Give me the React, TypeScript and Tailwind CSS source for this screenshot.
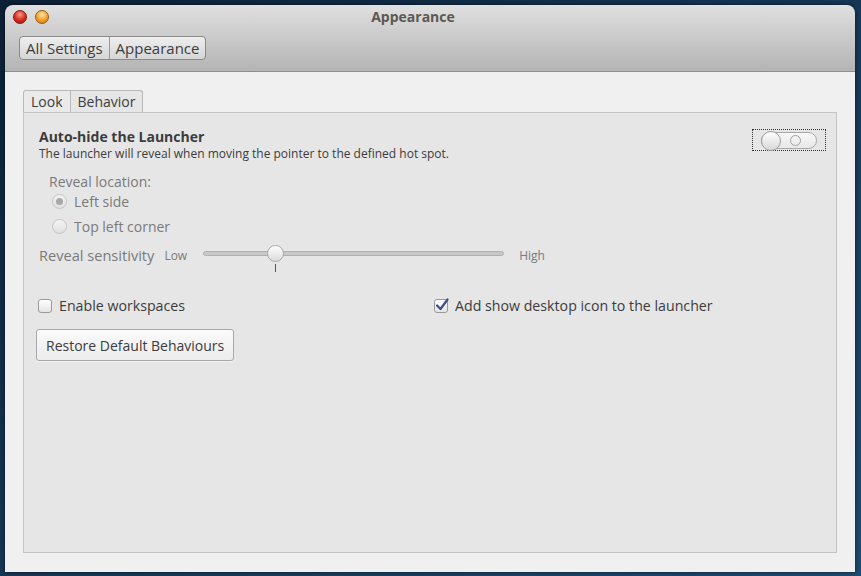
import React from 'react';

const font = { fontFamily: '"Open Sans", "DejaVu Sans", sans-serif' };

function Radio({ checked, label }: { checked?: boolean; label: string }) {
  return (
    <div className="flex items-center h-[25px]">
      <span className="w-[15px] h-[15px] rounded-full border border-[#c4c4c4] bg-gradient-to-b from-[#f4f4f4] to-[#e0e0e0] flex items-center justify-center">
        {checked && <span className="w-[7px] h-[7px] rounded-full bg-[#a8a8a8]" />}
      </span>
      <span className="ml-[7px] text-[14px] text-[#7a7a7a]">{label}</span>
    </div>
  );
}

function Checkbox({ checked, label }: { checked?: boolean; label: string }) {
  return (
    <div className="flex items-center">
      <span className="relative w-[14px] h-[14px] rounded-[3px] border border-[#9a9a9a] bg-gradient-to-b from-[#ffffff] to-[#e4e4e4]">
        {checked && (
          <svg className="absolute -left-[1px] -top-[3px]" width="16" height="16" viewBox="0 0 16 16">
            <path d="M3 8.5 L6.5 12 L13.5 2.5" fill="none" stroke="#3b4f86" strokeWidth="2.2" strokeLinecap="round" strokeLinejoin="round" />
          </svg>
        )}
      </span>
      <span className="ml-[7px] text-[14.2px] text-[#3c3c3c]">{label}</span>
    </div>
  );
}

export default function App() {
  return (
    <div
      className="w-[861px] h-[576px] overflow-hidden bg-gradient-to-br from-[#0c2036] via-[#163756] to-[#1e4b72] pt-[5px] pl-[5px]"
      style={font}
    >
      <div className="w-[850px] h-[567px] flex flex-col rounded-t-[8px] overflow-hidden shadow-[0_0_4px_rgba(0,0,0,0.6)]">
        {/* Header */}
        <div className="h-[67px] bg-gradient-to-b from-[#e0e0e0] to-[#b4b4b4] border-b border-[#8e8e8e] relative">
          <div className="flex items-center gap-[8px] pl-[8px] pt-[5px]">
            <span className="w-[14px] h-[14px] rounded-full bg-[radial-gradient(circle_at_50%_30%,#f69a8c,#d8291a_55%,#9c1208)] border border-[#7a1a10]" />
            <span className="w-[14px] h-[14px] rounded-full bg-[radial-gradient(circle_at_50%_30%,#fde3a6,#f2a12b_55%,#c66d09)] border border-[#9a5a10]" />
          </div>
          <div className="absolute left-0 right-0 top-[1px] text-center text-[14px] font-bold text-[#5c5852] pr-[34px]">Appearance</div>
          <div className="ml-[14px] mt-[12px] inline-flex h-[24px] rounded-[4px] border border-[#8a8a8a] bg-gradient-to-b from-[#eeeeee] to-[#d6d6d6] text-[15px] text-[#3c3c3c]">
            <span className="px-[6px] flex items-center border-r border-[#9a9a9a]">All Settings</span>
            <span className="px-[6px] flex items-center">Appearance</span>
          </div>
        </div>

        {/* Content */}
        <div className="flex-1 bg-[#f0f0f0] pt-[18px] pl-[18px] pr-[18px] pb-[19px] flex flex-col">
          <div className="flex h-[22px] text-[14px] text-[#3c3c3c]">
            <span className="px-[7px] flex items-center border border-b-0 border-[#b8b8b8] rounded-tl-[3px] bg-[#eaeaea]">Look</span>
            <span className="px-[7px] flex items-center border border-l-0 border-b-0 border-[#b8b8b8] rounded-tr-[3px] bg-[#e6e6e6]">Behavior</span>
          </div>
          <div className="flex-1 bg-[#e6e6e6] border border-[#c4c4c4] pl-[15px] pr-[10px] pt-[15px] relative">
            <div className="flex">
              <div className="flex-1">
                <div className="text-[14px] font-bold text-[#3c3c3c] leading-[18px]">Auto-hide the Launcher</div>
                <div className="text-[12px] text-[#3c3c3c] leading-[16px]">The launcher will reveal when moving the pointer to the defined hot spot.</div>
              </div>
              <div className="mt-[1px] w-[74px] h-[22px] border border-dotted border-[#333] flex items-center justify-center">
                <div className="w-[56px] h-[17px] rounded-full border border-[#a8a8a8] bg-gradient-to-b from-[#f8f8f8] to-[#e8e8e8] relative">
                  <span className="absolute -left-[1px] -top-[2px] w-[20px] h-[20px] rounded-full border border-[#9c9c9c] bg-gradient-to-b from-[#ffffff] to-[#d8d8d8]" />
                  <span className="absolute left-[28px] top-[2px] w-[11px] h-[11px] rounded-full border border-[#a0a0a0]" />
                </div>
              </div>
            </div>

            <div className="ml-[10px] mt-[11px]">
              <div className="text-[14px] text-[#7a7a7a] leading-[18px]">Reveal location:</div>
              <div className="ml-[3px] mt-[-2px]">
                <Radio checked label="Left side" />
                <Radio label="Top left corner" />
              </div>
            </div>

            <div className="flex items-start mt-[4px] h-[30px]">
              <span className="text-[14.6px] text-[#7a7a7a] leading-[20px] mt-[2px]">Reveal sensitivity</span>
              <span className="text-[12px] text-[#7a7a7a] ml-[10px] mt-[4px]">Low</span>
              <div className="relative ml-[16px] w-[301px] h-[30px]">
                <div className="absolute left-0 right-0 top-[8px] h-[5px] rounded-full bg-[#c8c8c8] border border-[#b0b0b0]" />
                <span className="absolute left-[64px] top-[2px] w-[17px] h-[17px] rounded-full border border-[#a8a8a8] bg-gradient-to-b from-[#fdfdfd] to-[#dcdcdc]" />
                <span className="absolute left-[72px] top-[21px] w-[1px] h-[8px] bg-[#555]" />
              </div>
              <span className="text-[12px] text-[#7a7a7a] ml-[15px] mt-[4px]">High</span>
            </div>

            <div className="flex mt-[22px]">
              <div className="w-[396px] ml-[-1px]">
                <Checkbox label="Enable workspaces" />
              </div>
              <Checkbox checked label="Add show desktop icon to the launcher" />
            </div>

            <button className="mt-[13px] ml-[-3px] h-[32px] px-[9px] rounded-[3px] border border-[#a8a8a8] bg-gradient-to-b from-[#fbfbfb] to-[#ececec] text-[14px] text-[#3c3c3c] shadow-[0_1px_0_rgba(255,255,255,0.6)]">
              Restore Default Behaviours
            </button>
          </div>
        </div>
      </div>
    </div>
  );
}
